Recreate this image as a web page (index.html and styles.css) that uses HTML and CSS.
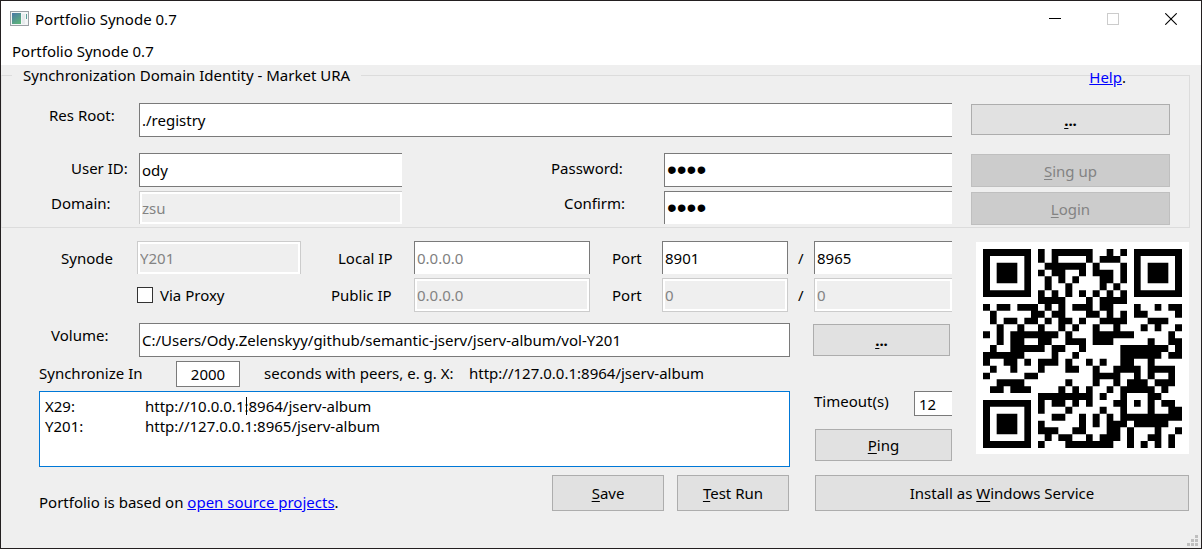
FILE: index.html
```html
<!DOCTYPE html>
<html lang="en">
<head>
<meta charset="utf-8">
<title>Portfolio Synode 0.7</title>
<link rel="stylesheet" href="styles.css">
</head>
<body>
<div class="window">
  <header class="titlebar">
    <svg class="app-icon" viewBox="0 0 19 16" aria-hidden="true">
      <defs>
        <linearGradient id="pane" x1="0" y1="0" x2="0.6" y2="1"><stop offset="0" stop-color="#4a78a8"/><stop offset="1" stop-color="#5cb07c"/></linearGradient>
      </defs>
      <rect x="0.5" y="0.5" width="18" height="14" fill="#f4f6f7" stroke="#9aa0a5"/>
      <rect x="2" y="2" width="9" height="11" fill="url(#pane)"/>
      <rect x="12" y="3" width="3" height="10" fill="#e6eaec"/>
      <rect x="16" y="3" width="1" height="5" fill="#5a9e98"/>
    </svg>
    <h1 class="title">Portfolio Synode 0.7</h1>
    <button class="sys" type="button" aria-label="Minimize"><svg viewBox="0 0 12 12"><path d="M0 5.5H12" stroke="#000"/></svg></button>
    <button class="sys" type="button" aria-label="Maximize" disabled><svg viewBox="0 0 12 12"><rect x="0.5" y="0.5" width="11" height="11" fill="none" stroke="#ccc"/></svg></button>
    <button class="sys" type="button" aria-label="Close"><svg viewBox="0 0 12 12"><path d="M0.3 0.3L11.7 11.7M11.7 0.3L0.3 11.7" stroke="#000" stroke-width="1.1"/></svg></button>
  </header>
  <nav class="menubar">Portfolio Synode 0.7</nav>

  <main class="content">
    <fieldset class="identity">
      <legend>Synchronization Domain Identity - Market URA</legend>
      <div class="help"><a href="#help">Help</a>.</div>
      <div class="identity-grid">
        <label class="lbl in-root" for="root">Res Root:</label>
        <input class="field cut wide" id="root" type="text" value="./registry">
        <button class="btn root-btn" type="button"><b><u>.</u>..</b></button>

        <label class="lbl low in-user" for="user">User ID:</label>
        <input class="field cut" id="user" type="text" value="ody">
        <label class="lbl low in-pswd" for="pswd">Password:</label>
        <input class="field cut secret" id="pswd" type="password" value="1234">
        <button class="btn side-btn" type="button" disabled><u>S</u>ing up</button>

        <label class="lbl in-domain last" for="domain">Domain:</label>
        <input class="field cut clipped last" id="domain" type="text" value="zsu" disabled>
        <label class="lbl in-confirm last" for="confirm">Confirm:</label>
        <input class="field cut clipped secret last" id="confirm" type="password" value="1234">
        <button class="btn side-btn login-btn" type="button" disabled><u>L</u>ogin</button>
      </div>
    </fieldset>

    <div class="service">
      <div class="config">
        <div class="network">
          <label class="in-synode" for="synode">Synode</label>
          <input class="field clipped" id="synode" type="text" value="Y201" disabled>
          <label class="in-local" for="local">Local IP</label>
          <input class="field clipped" id="local" type="text" placeholder="0.0.0.0">
          <label class="in-port" for="port">Port</label>
          <input class="field clipped" id="port" type="text" value="8901">
          <label class="in-slash" for="webport">/</label>
          <input class="field cut clipped" id="webport" type="text" value="8965">

          <label class="proxy"><input type="checkbox" class="tick">Via Proxy</label>
          <label class="in-public" for="public">Public IP</label>
          <input class="field" id="public" type="text" value="0.0.0.0" disabled>
          <label class="in-port" for="pubport">Port</label>
          <input class="field" id="pubport" type="text" value="0" disabled>
          <label class="in-slash" for="pubwebport">/</label>
          <input class="field cut" id="pubwebport" type="text" value="0" disabled>
        </div>

        <div class="peers">
          <div class="peers-main">
            <div class="volume">
              <label class="lbl in-volume" for="volume">Volume:</label>
              <input class="field" id="volume" type="text" value="C:/Users/Ody.Zelenskyy/github/semantic-jserv/jserv-album/vol-Y201">
            </div>
            <div class="sync">
              <label class="sync-label" for="seconds">Synchronize In</label>
              <input class="field seconds" id="seconds" type="text" value="2000">
              <span class="hint">seconds with peers, e. g. X:</span>
              <span class="sample">http://127.0.0.1:8964/jserv-album</span>
            </div>
            <div class="list">
              <textarea class="peer-list" aria-label="Peers" spellcheck="false">X29:&#9;http://10.0.0.1:8964/jserv-album
Y201:&#9;http://127.0.0.1:8965/jserv-album</textarea>
              <span class="caret" aria-hidden="true"></span>
            </div>
          </div>
          <div class="peers-side">
            <button class="btn browse" type="button"><b><u>.</u>..</b></button>
            <div class="timeout">
              <label for="timeout">Timeout(s)</label>
              <input class="field cut" id="timeout" type="text" value="12">
            </div>
            <button class="btn ping" type="button"><u>P</u>ing</button>
          </div>
        </div>
      </div>
      <svg class="qr" id="qr" viewBox="0 0 213 212" role="img" aria-label="QR code"><rect width="213" height="212" fill="#fff"/></svg>
    </div>

    <footer class="actions">
      <p class="credit">Portfolio is based on <a href="#projects">open source projects</a>.</p>
      <button class="btn act" type="button"><u>S</u>ave</button>
      <button class="btn act" type="button"><u>T</u>est Run</button>
      <button class="btn install" type="button">Install as <u>W</u>indows Service</button>
    </footer>
  </main>
  <svg class="grip" viewBox="0 0 11 11" aria-hidden="true"><path fill="#bfbfbf" d="M8 0h3v3h-3zM8 4h3v3h-3zM8 8h3v3h-3zM4 4h3v3h-3zM4 8h3v3h-3zM0 8h3v3h-3z"/></svg>
</div>
<script src="qr.js"></script>
</body>
</html>
```

FILE: styles.css
```css
* { box-sizing: border-box; }

body {
  margin: 0;
  background: #efefef;
  color: #000;
  font: 15px/20px "Noto Sans", "Open Sans", sans-serif;
}

input, button, textarea { font: inherit; color: inherit; margin: 0; border-radius: 0; }
a { color: #00f; }
u { text-underline-offset: 2px; }

.window {
  position: relative;
  display: flex;
  flex-direction: column;
  min-height: 100vh;
  border: 1px solid #231f20;
}

.titlebar {
  display: flex;
  align-items: center;
  height: 35px;
  padding: 0 1px 0 9px;
  background: #fff;
}
.app-icon { width: 19px; height: 16px; }
.title { flex: 1; margin: 0 0 0 6px; font-size: 15px; font-weight: 400; }
.sys { width: 58px; height: 34px; padding: 0; border: 0; background: none; }
.sys svg { display: block; width: 12px; height: 12px; margin: auto; }

.menubar { height: 29px; padding: 5px 11px; background: #fff; }

.identity {
  position: relative;
  margin: 0 11px 0 0;
  padding: 18px 19px 3px 1px;
  border: 1px solid #dcdcdc;
  border-left-color: #e6e6e6;
  min-width: 0;
}
.identity legend { margin-left: 9px; padding: 0 11px; }
.help { position: absolute; top: -18px; right: 63px; }

.identity-grid {
  display: grid;
  grid-template-columns: 136px 263fr 262px 288fr 218px;
  grid-template-rows: 34px 34px 37px;
  row-gap: 16px;
  margin-bottom: -16px;
}
.last, .login-btn { margin-top: -12px; margin-bottom: 16px; }
.wide { grid-column: 2 / 5; }

.lbl { line-height: 24px; white-space: nowrap; }
.low { line-height: 30px; }
.in-root { padding-left: 46px; }
.in-user { padding-left: 68px; }
.in-domain { padding-left: 48px; }
.in-pswd { padding-left: 149px; }
.in-confirm { padding-left: 162px; }

.field {
  width: 100%;
  min-width: 0;
  height: 100%;
  padding: 0 2px;
  border: 1px solid #7a7a7a;
  background: #fff;
  outline: 0;
}
.field.last { height: 33px; }
.field::placeholder { color: #7f7f7f; opacity: 1; }
.field:disabled {
  border-color: #ccc;
  background: #efefef;
  box-shadow: inset 0 0 0 2px #fff;
  color: #838383;
}
.cut { border-right: 0; }
.clipped { border-bottom: 0; }
.secret { font-family: "Liberation Sans", sans-serif; font-size: 28px; }

.btn {
  padding: 0;
  border: 1px solid #adadad;
  background: #e1e1e1;
  text-align: center;
}
.btn:disabled { border-color: #bfbfbf; background: #ccc; color: #838383; }
.root-btn { height: 31px; margin: 1px 0 0 19px; }
.side-btn { height: 33px; margin: 1px 0 0 19px; }
.login-btn { margin-top: -11px; }

.service { display: flex; align-items: flex-start; gap: 24px; padding: 13px 12px 0 0; }
.config { flex: 1; min-width: 0; }
.qr { flex: none; width: 213px; height: 212px; margin-top: 1px; }

.network {
  display: grid;
  grid-template-columns: 136px 164fr 113px 176fr 72px 126fr 26px 138fr;
  grid-template-rows: 33px 34px;
  row-gap: 4px;
  align-items: center;
  line-height: 18px;
  white-space: nowrap;
}
.in-synode { padding-left: 60px; }
.in-local { padding-left: 37px; }
.in-public { padding-left: 30px; }
.in-port { padding-left: 22px; }
.in-slash { padding-left: 10px; }
.proxy { grid-column: 2; display: flex; align-items: center; gap: 7px; }
.tick {
  appearance: none;
  flex: none;
  width: 16px;
  height: 16px;
  border: 1px solid #333;
  background: #fff;
}

.peers { display: flex; margin-top: 11px; }
.peers-main { flex: 1; min-width: 0; }
.peers-side { flex: none; width: 162px; }

.volume { display: flex; height: 34px; }
.in-volume { flex: none; width: 138px; padding-left: 50px; }
.sync { display: flex; margin: 4px 0 4px 38px; white-space: nowrap; line-height: 24px; }
.sync-label { width: 137px; }
.seconds { width: 64px; height: 26px; text-align: center; }
.hint { width: 205px; margin-left: 24px; }

.list { position: relative; margin-left: 38px; }
.peer-list {
  display: block;
  width: 100%;
  height: 76px;
  padding: 4px 5px;
  border: 1px solid #0078d7;
  background: #fff;
  outline: 0;
  resize: none;
  tab-size: 100px;
}
.caret { position: absolute; top: 6px; left: 207px; width: 1px; height: 18px; background: #000; }

.browse { display: block; width: 137px; height: 32px; margin: 1px 0 0 23px; }
.timeout { display: flex; justify-content: space-between; height: 25px; margin: 35px 0 13px 24px; }
.timeout .field { width: 38px; padding-left: 4px; }
.ping { display: block; width: 137px; height: 32px; margin-left: 25px; }

.actions { display: flex; gap: 13px; padding: 8px 12px 0 38px; }
.actions .btn { height: 36px; }
.credit { flex: 1; margin: 17px 0 0; white-space: nowrap; }
.act { width: 112px; }
.install { width: 374px; margin-left: 13px; }

.grip { position: absolute; right: 3px; bottom: 2px; width: 11px; height: 11px; }
```

FILE: qr.js
```js
const rows = [
  "11111110101111110010101111111",
  "10000010101000010111001000001",
  "10111010011111101000101011101",
  "10111010101100101110101011101",
  "10111010010101000110101011101",
  "10000010010010000101001000001",
  "11111110101010101010101111111",
  "00000000111100010111100000000",
  "10110111010101110110001001011",
  "01000001101100011010101100001",
  "01011011010110100111100011100",
  "00100100100101001001000101001",
  "10101111111010001111110000010",
  "00101100110011101110000010011",
  "01001111101100100000111111101",
  "11111100001001000000111111011",
  "10011010111010010100110010000",
  "01001000100011001001111011110",
  "10000011000000001111001010010",
  "00111100000010001001011101110",
  "01101110000101010010111110100",
  "00000000111111110100100011000",
  "11111110101101010001101010110",
  "10000010100010000100100010011",
  "10111010001100101010111111111",
  "10111010100000101011101111100",
  "10111010111001100011010001001",
  "10000010010110010111010011010",
  "11111110100011111110010101010"
];

const size = 199 / rows.length;
const at = n => Math.round((7 + n * size) * 3) / 3;
let d = "";
rows.forEach((row, y) => {
  for (const run of row.matchAll(/1+/g)) {
    const left = at(run.index);
    const right = at(run.index + run[0].length);
    d += `M${left} ${at(y)}H${right}V${at(y + 1)}H${left}Z`;
  }
});
const path = document.createElementNS("http://www.w3.org/2000/svg", "path");
path.setAttribute("d", d);
document.getElementById("qr").append(path);
```
